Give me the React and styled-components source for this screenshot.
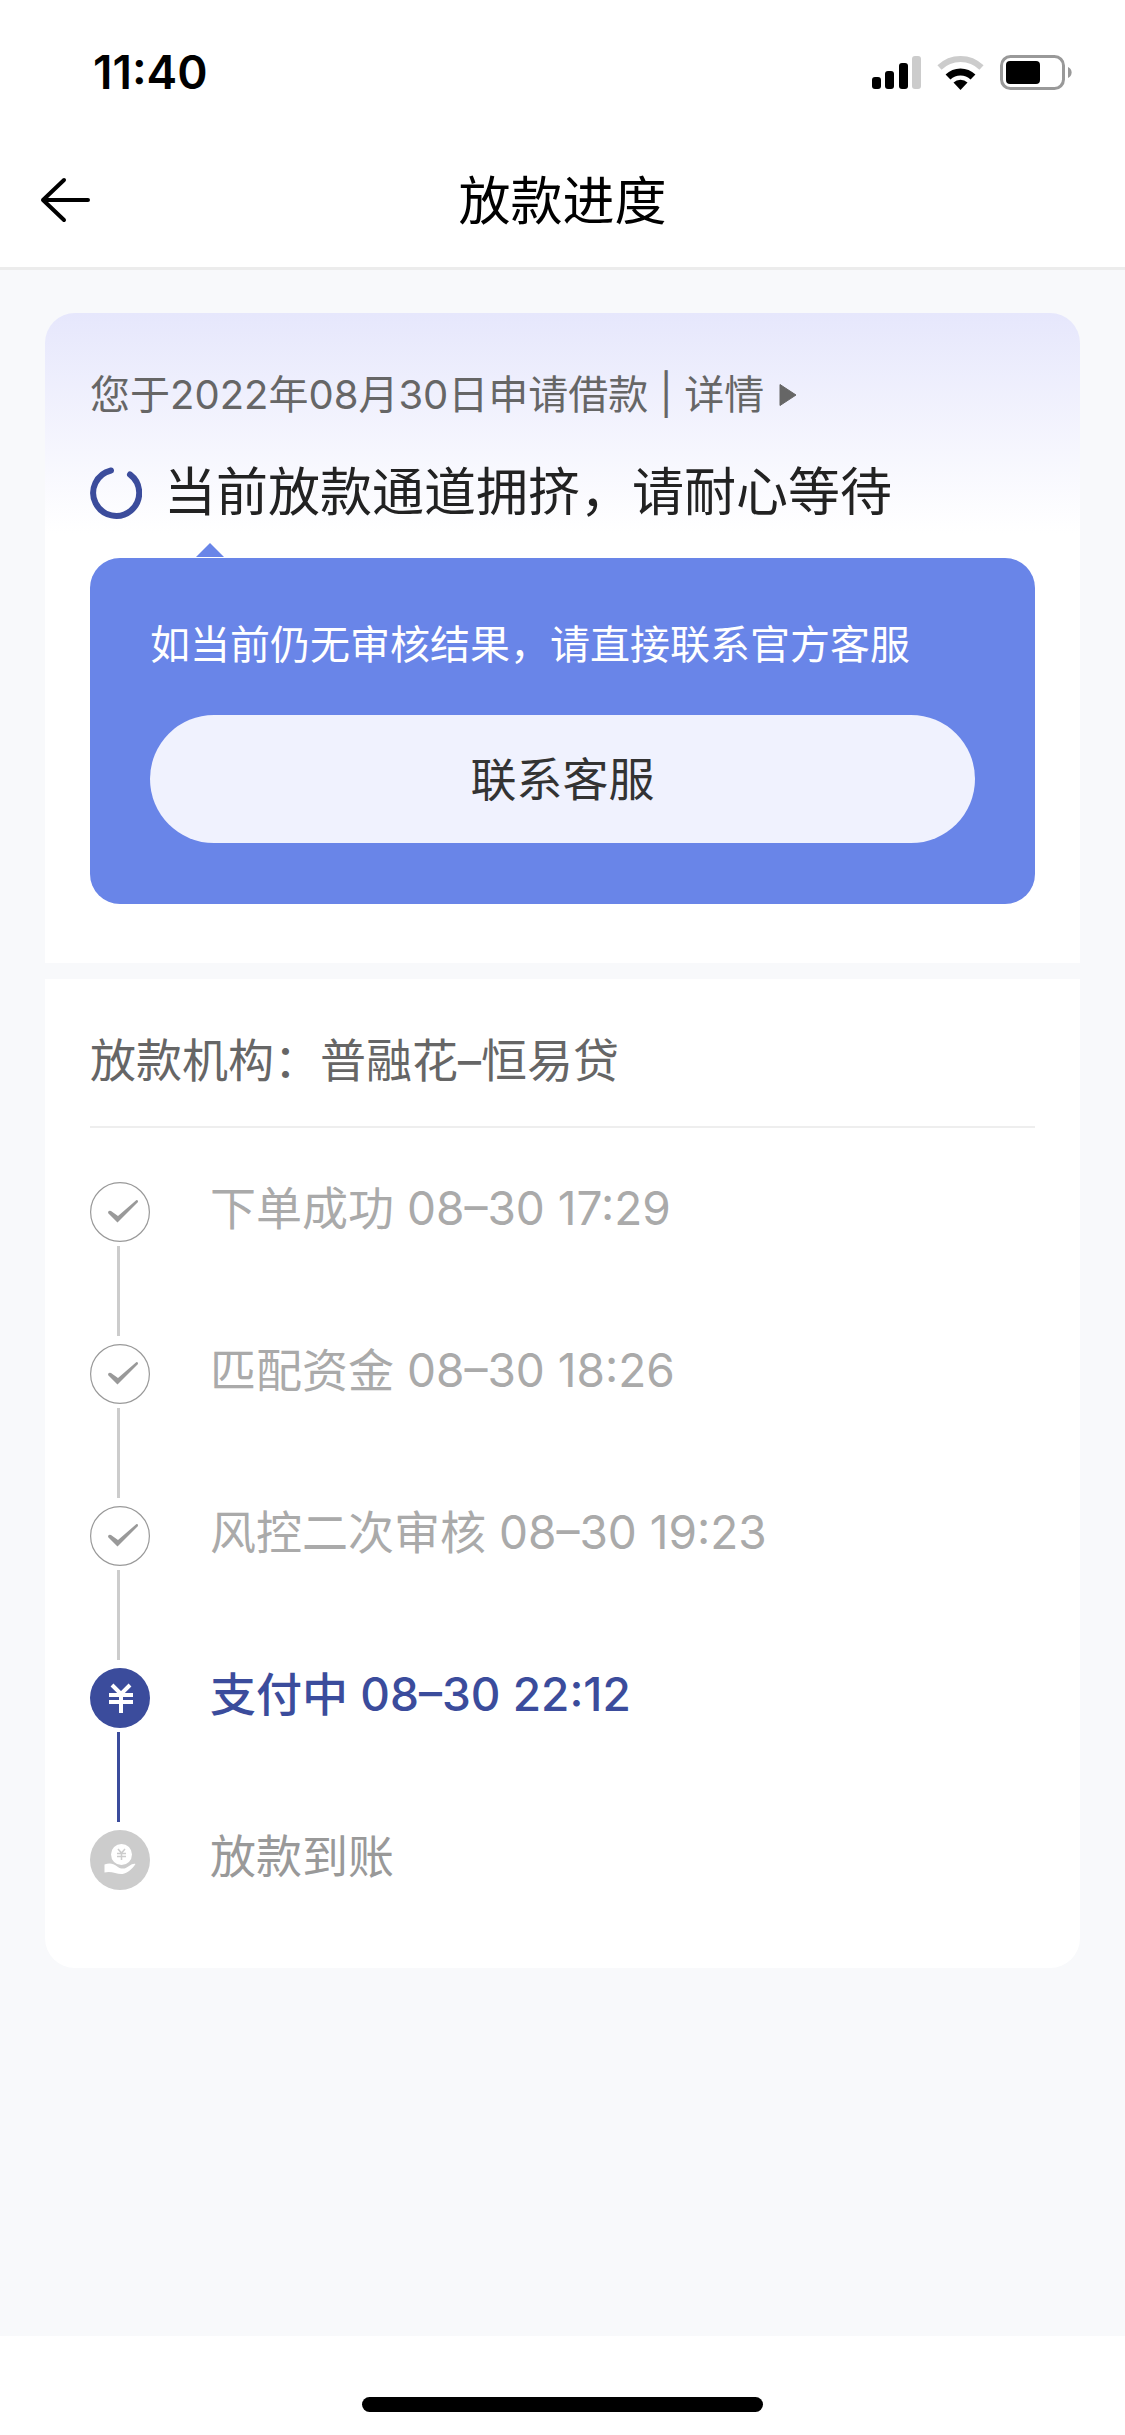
import React from "react";
import styled, { createGlobalStyle, css } from "styled-components";

const brand = '#3b4c9c';
const accent = '#6985e8';

const GlobalStyle = createGlobalStyle`
  * {
    box-sizing: border-box;
  }

  body {
    margin: 0;
    background: #f8f9fb;
    font-family: Inter, "Noto Sans CJK SC", sans-serif;
  }
`;

const Page = styled.div`
  min-height: 100vh;
  display: flex;
  flex-direction: column;
`;

const StatusBar = styled.div`
  display: flex;
  align-items: center;
  justify-content: space-between;
  height: 144px;
  padding: 0 53px 0 93px;
  background: #fff;
`;

const Clock = styled.span`
  font-size: 46px;
  line-height: 60px;
  font-weight: 600;
  color: #000;
`;

const StatusIcons = styled.div`
  display: flex;
  align-items: center;
  gap: 16px;

  svg {
    display: block;
  }
`;

const NavBar = styled.header`
  display: grid;
  grid-template-columns: 90px 1fr 90px;
  align-items: center;
  height: 126px;
  padding: 0 37px 12px;
  border-bottom: 3px solid #ececec;
  background: #fff;
`;

const BackButton = styled.button`
  display: flex;
  padding: 0;
  border: 0;
  background: none;
  cursor: pointer;
`;

const Title = styled.h1`
  margin: 0;
  padding-top: 4px;
  font-size: 52px;
  line-height: 72px;
  font-weight: 400;
  text-align: center;
  color: #000;
`;

const Content = styled.main`
  flex: 1;
  padding: 43px 45px;
`;

const Summary = styled.section`
  padding: 52px 45px 59px;
  border-radius: 30px 30px 0 0;
  background: linear-gradient(180deg, #e6e7fc 0, #fff 220px);
`;

const ApplyInfo = styled.p`
  display: flex;
  align-items: center;
  margin: 0;
  font-size: 40px;
  line-height: 60px;
  color: #666;
  white-space: pre;
`;

const DetailLink = styled.a`
  display: flex;
  align-items: center;
  gap: 15px;
  color: inherit;
  text-decoration: none;
`;

const State = styled.h2`
  display: flex;
  align-items: center;
  gap: 22px;
  margin: 32px 0 0;
  font-size: 52px;
  line-height: 72px;
  font-weight: 400;
  color: #222;
`;

const Tip = styled.div`
  position: relative;
  margin-top: 29px;
  padding: 57px 60px 61px;
  border-radius: 30px;
  background: ${accent};

  &::before {
    content: '';
    position: absolute;
    left: 106px;
    bottom: calc(100% + 1px);
    border: 14px solid transparent;
    border-top-width: 0;
    border-bottom-color: ${accent};
  }
`;

const TipText = styled.p`
  margin: 0;
  font-size: 40px;
  line-height: 60px;
  color: #fff;
`;

const ServiceButton = styled.button`
  width: 100%;
  height: 128px;
  margin-top: 40px;
  padding: 0 0 6px;
  border: 0;
  border-radius: 64px;
  background: #f0f2fe;
  font-family: inherit;
  font-size: 46px;
  color: #333;
  cursor: pointer;
`;

const Detail = styled.section`
  margin-top: 16px;
  padding: 45px 45px 78px;
  border-radius: 0 0 30px 30px;
  background: #fff;
`;

const Lender = styled.h3`
  margin: 0;
  padding-bottom: 30px;
  border-bottom: 2px solid #eee;
  font-size: 46px;
  line-height: 72px;
  font-weight: 400;
  color: #666;
`;

const Steps = styled.ol`
  margin: 0;
  padding: 54px 0 0;
  list-style: none;
`;

const Step = styled.li`
  display: grid;
  grid-template-columns: 60px 1fr;
  column-gap: 60px;
  font-size: 46px;
  line-height: 52px;
  color: ${props => (props.$status === 'todo' ? '#999' : '#aaa')};

  ${props => props.$status === 'doing' && css`
    font-weight: 500;
    color: ${brand};
  `}
`;

const StepMark = styled.div`
  svg {
    display: block;
  }
`;

const StepLine = styled.span`
  display: block;
  width: 3px;
  height: 90px;
  margin: 4px 0 8px 27px;
  background: ${props => (props.$active ? brand : '#ccc')};
`;

const HomeArea = styled.footer`
  display: flex;
  justify-content: center;
  height: 99px;
  padding-top: 61px;
  background: #fff;
`;

const HomeIndicator = styled.div`
  width: 401px;
  height: 15px;
  border-radius: 8px;
  background: #000;
`;

const SignalIcon = () => (
  <svg width="49" height="35" viewBox="0 0 49 35">
    <rect x="0" y="22" width="9" height="12" rx="3" />
    <rect x="13" y="16" width="9" height="18" rx="3" />
    <rect x="27" y="8" width="9" height="26" rx="3" />
    <rect x="40" y="1" width="9" height="33" rx="3" fill="#ccc" />
  </svg>
);

const WifiIcon = () => (
  <svg width="47" height="35" viewBox="0 0 47 35" fill="none">
    <path d="M2.500 12.500a30 30 0 0 1 42 0" stroke="#ccc" strokeWidth="6" />
    <path d="M11 22a18 18 0 0 1 25 0" stroke="#000" strokeWidth="7" />
    <path d="M23.500 35l-7-7.500a10 10 0 0 1 14 0z" fill="#000" />
  </svg>
);

const BatteryIcon = () => (
  <svg width="72" height="35" viewBox="0 0 72 35">
    <rect x="1.5" y="1.5" width="62" height="32" rx="9" fill="none" stroke="#999" strokeWidth="3" />
    <rect x="6" y="6" width="34" height="23" rx="4" />
    <path d="M68 12a6 6 0 0 1 0 11z" fill="#999" />
  </svg>
);

const BackIcon = () => (
  <svg width="56" height="48" viewBox="0 0 56 48" fill="none" stroke="#000" strokeWidth="4" strokeLinecap="round" strokeLinejoin="round">
    <path d="M27 4L6 24l21 20M6 24h45" />
  </svg>
);

const LoadingIcon = () => (
  <svg width="52" height="52" viewBox="0 0 52 52" fill="none" stroke={brand} strokeWidth="6" strokeLinecap="round">
    <path d="M21 3.5A23 23 0 1 0 40 7.500" />
  </svg>
);

const PlayIcon = () => (
  <svg width="18" height="24" viewBox="0 0 18 24">
    <path d="M1 1.5v21L17 12z" fill="#666" stroke="#666" strokeLinejoin="round" />
  </svg>
);

const DoneIcon = () => (
  <svg width="60" height="60" viewBox="0 0 60 60">
    <circle cx="30" cy="30" r="29.4" fill="none" stroke="#999" strokeWidth="1.2" />
    <path d="M18 31q0-3 3-2l7 5L46.5 18q2 0 1.500 2L27.5 40.5z" fill="#999" />
  </svg>
);

const PayingIcon = () => (
  <svg width="60" height="60" viewBox="0 0 60 60">
    <circle cx="30" cy="30" r="30" fill={brand} />
    <path d="M22 17l9 9 9-9M31 26v19M19 27h24M19 34h24" fill="none" stroke="#fff" strokeWidth="4" />
  </svg>
);

const ArrivedIcon = () => (
  <svg width="60" height="60" viewBox="0 0 60 60">
    <circle cx="30" cy="30" r="30" fill="#ccc" />
    <circle cx="31.5" cy="24.5" r="10.5" fill="#fff" />
    <path d="M28 19l3.500 4 3.500-4M31.500 23v7M27 23.500h9M27 26.500h9" fill="none" stroke="#ccc" strokeWidth="1.5" />
    <path d="M14.5 34.500c5-2 9-1 12 1.500 2 1.800 5 3 8 2.500 4-.8 7-5.500 11-4.500-3 4.500-8 9.500-13 10-6 .5-11-3.500-18-1.500z" fill="#fff" />
  </svg>
);

const icons = {
  done: DoneIcon,
  doing: PayingIcon,
  todo: ArrivedIcon,
};

const steps = [
  { name: '下单成功', time: '08–30 17:29', status: 'done' },
  { name: '匹配资金', time: '08–30 18:26', status: 'done' },
  { name: '风控二次审核', time: '08–30 19:23', status: 'done' },
  { name: '支付中', time: '08–30 22:12', status: 'doing' },
  { name: '放款到账', status: 'todo' },
];

export default () => (
  <Page>
    <GlobalStyle />
    <StatusBar>
      <Clock>11:40</Clock>
      <StatusIcons>
        <SignalIcon />
        <WifiIcon />
        <BatteryIcon />
      </StatusIcons>
    </StatusBar>
    <NavBar>
      <BackButton type="button" aria-label="返回">
        <BackIcon />
      </BackButton>
      <Title>放款进度</Title>
    </NavBar>
    <Content>
      <Summary>
        <ApplyInfo>
          <span>您于2022年08月30日申请借款 | </span>
          <DetailLink href="#detail">
            详情
            <PlayIcon />
          </DetailLink>
        </ApplyInfo>
        <State>
          <LoadingIcon />
          当前放款通道拥挤，请耐心等待
        </State>
        <Tip>
          <TipText>如当前仍无审核结果，请直接联系官方客服</TipText>
          <ServiceButton type="button">联系客服</ServiceButton>
        </Tip>
      </Summary>
      <Detail id="detail">
        <Lender>放款机构：普融花–恒易贷</Lender>
        <Steps>
          {steps.map(({ name, time, status }, i) => {
            const Icon = icons[status];
            return (
              <Step key={name} $status={status}>
                <StepMark>
                  <Icon />
                  {i < steps.length - 1 && <StepLine $active={status === 'doing'} />}
                </StepMark>
                <span>{name}{time && ` ${time}`}</span>
              </Step>
            );
          })}
        </Steps>
      </Detail>
    </Content>
    <HomeArea>
      <HomeIndicator />
    </HomeArea>
  </Page>
);
